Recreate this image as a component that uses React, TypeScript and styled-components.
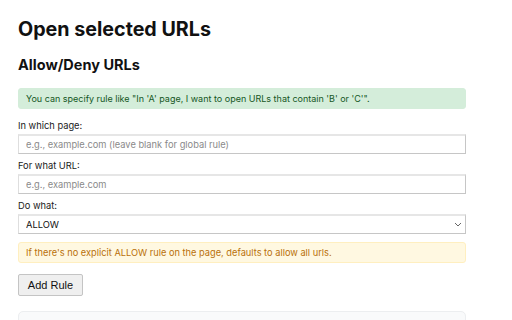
import React from 'react';
import styled, { createGlobalStyle } from 'styled-components';

const GlobalStyle = createGlobalStyle`
  body {
    margin: 0;
    background: #ffffff;
    font-family: Inter, "Noto Sans", sans-serif;
    color: #111111;
  }
`;

const Page = styled.div`
  width: 448px;
  padding: 14px 18px 0;
`;

const Title = styled.h1`
  margin: 0 0 10px;
  font-size: 19.7px;
  font-weight: 700;
  line-height: 30px;
`;

const Subtitle = styled.h2`
  margin: 0 0 12px;
  font-size: 14.5px;
  font-weight: 700;
  line-height: 22px;
`;

const Notice = styled.div<{ $tone: 'info' | 'warn' }>`
  box-sizing: border-box;
  height: 21px;
  padding: 0 7px;
  display: flex;
  align-items: center;
  font-size: ${p => (p.$tone === 'info' ? '9px' : '9.25px')};
  border-radius: 3px;
  background: ${p => (p.$tone === 'info' ? '#d4edda' : '#fff8e1')};
  color: ${p => (p.$tone === 'info' ? '#155724' : '#b9700a')};
  border: 1px solid ${p => (p.$tone === 'info' ? '#d4edda' : '#ffefc0')};
  margin-top: ${p => (p.$tone === 'info' ? '0' : '2px')};
`;

const Form = styled.div`
  display: flex;
  flex-direction: column;
  margin-top: 11px;
`;

const Field = styled.label`
  display: flex;
  flex-direction: column;
  gap: 2px;
  margin-bottom: 6px;
`;

const LabelText = styled.span`
  font-size: 9.3px;
  line-height: 12px;
  color: #1a1a1a;
`;

const TextInput = styled.input`
  display: block;
  box-sizing: border-box;
  width: 100%;
  height: 20px;
  margin: 0;
  padding: 0 7px;
  font-family: Inter, "Noto Sans", sans-serif;
  font-size: 9.3px;
  color: #222222;
  border-style: solid;
  border-width: 2px 1px 1px 1px;
  border-color: #e6e6e6 #c6c6c6 #c6c6c6 #dedede;
  outline: none;
  &::placeholder {
    color: #8a8a8a;
  }
`;

const SelectWrap = styled.div`
  position: relative;
`;

const Select = styled.select`
  display: block;
  box-sizing: border-box;
  width: 100%;
  height: 20px;
  margin: 0;
  padding: 0 7px;
  appearance: none;
  background: #ffffff;
  font-family: Inter, "Noto Sans", sans-serif;
  font-size: 9.3px;
  color: #111111;
  border-style: solid;
  border-width: 2px 1px 1px 1px;
  border-color: #e6e6e6 #c6c6c6 #c6c6c6 #dedede;
  border-radius: 0;
  outline: none;
`;

const Chevron = styled.svg`
  position: absolute;
  right: 4px;
  top: 8px;
  pointer-events: none;
`;

const Button = styled.button`
  align-self: flex-start;
  box-sizing: border-box;
  width: 65px;
  height: 22px;
  margin-top: 11px;
  padding: 0;
  font-family: "Liberation Sans", Arial, sans-serif;
  font-size: 11px;
  color: #111111;
  background: #efefef;
  border: 1px solid #c4c4c4;
  border-radius: 2px;
`;

const RuleList = styled.div`
  box-sizing: border-box;
  height: 40px;
  margin-top: 15px;
  background: #f9fafb;
  border: 1px solid #eceef0;
  border-radius: 5px;
`;

export default function App() {
  return (
    <>
      <GlobalStyle />
      <Page>
        <Title>Open selected URLs</Title>
        <Subtitle>Allow/Deny URLs</Subtitle>
        <Notice $tone="info">
          You can specify rule like "In 'A' page, I want to open URLs that contain 'B' or 'C'".
        </Notice>
        <Form>
          <Field>
            <LabelText>In which page:</LabelText>
            <TextInput placeholder="e.g., example.com (leave blank for global rule)" />
          </Field>
          <Field>
            <LabelText>For what URL:</LabelText>
            <TextInput placeholder="e.g., example.com" />
          </Field>
          <Field>
            <LabelText>Do what:</LabelText>
            <SelectWrap>
              <Select defaultValue="ALLOW">
                <option value="ALLOW">ALLOW</option>
                <option value="DENY">DENY</option>
              </Select>
              <Chevron width="8" height="5" viewBox="0 0 8 5">
                <path d="M1 1l3 3 3-3" fill="none" stroke="#666" strokeWidth="1" />
              </Chevron>
            </SelectWrap>
          </Field>
          <Notice $tone="warn">
            If there's no explicit ALLOW rule on the page, defaults to allow all urls.
          </Notice>
          <Button>Add Rule</Button>
          <RuleList />
        </Form>
      </Page>
    </>
  );
}
